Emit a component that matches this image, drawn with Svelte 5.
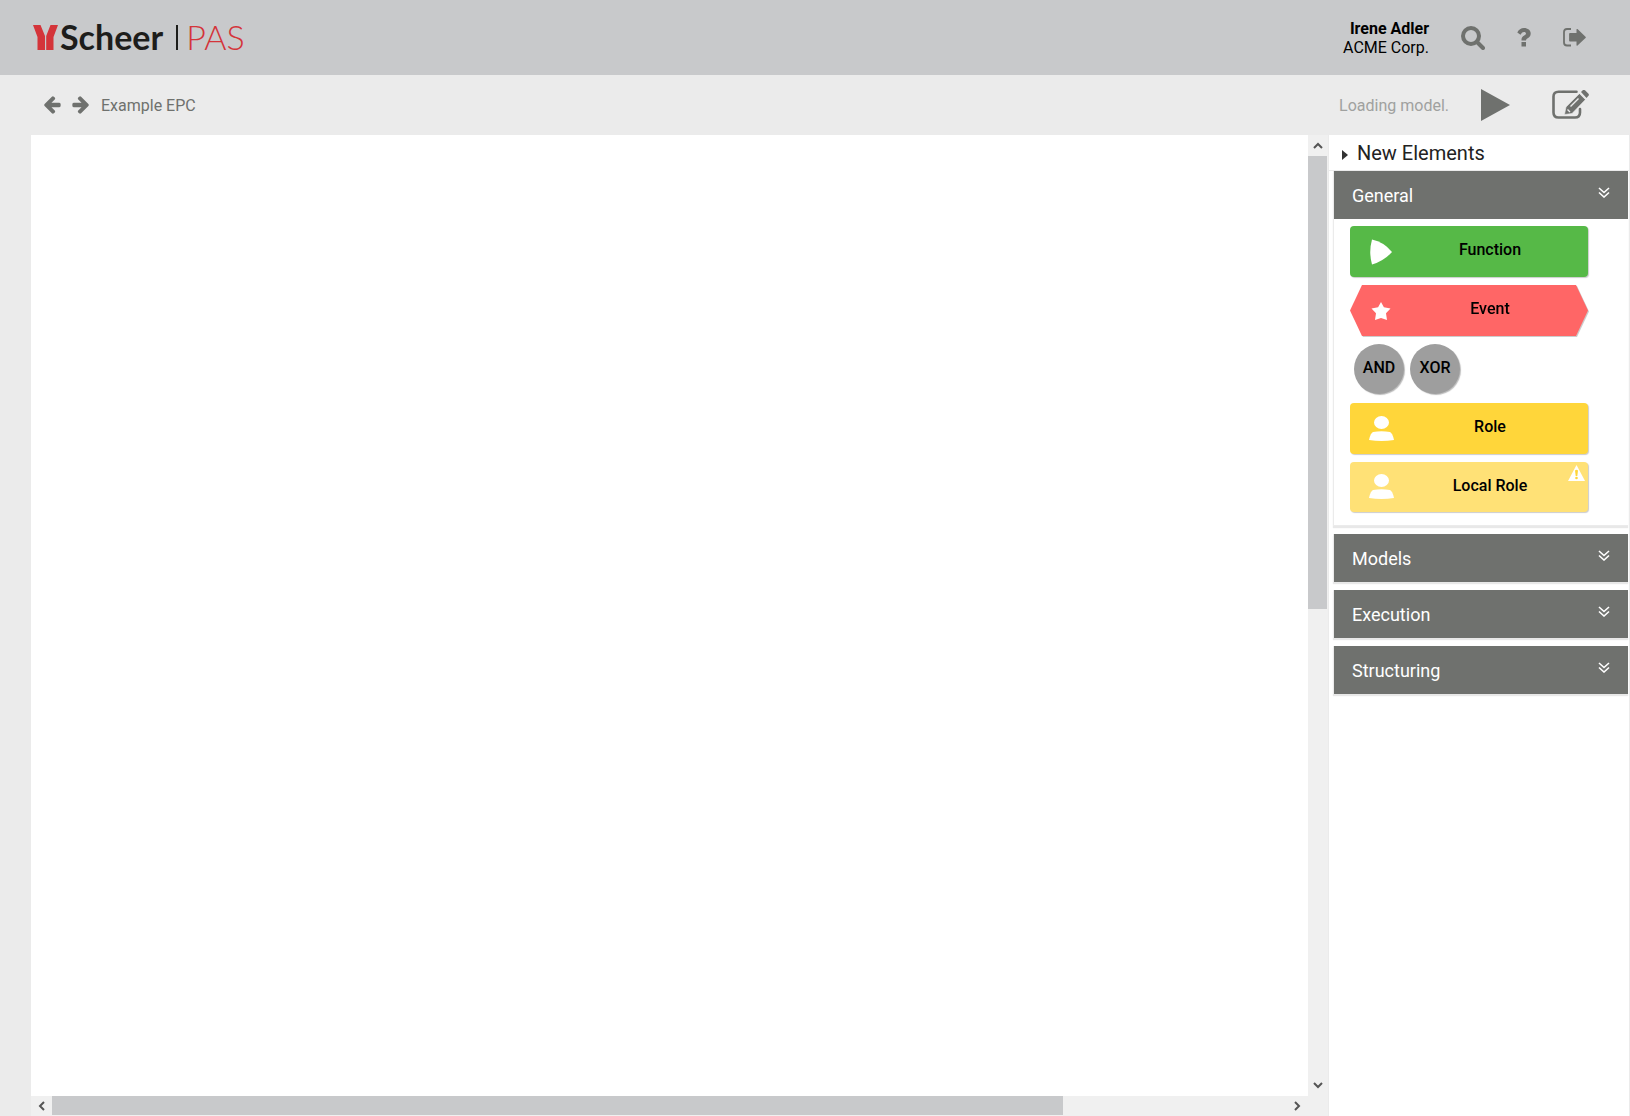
<script>
  let sections = $state([
    { name: 'General', open: true },
    { name: 'Models', open: false },
    { name: 'Execution', open: false },
    { name: 'Structuring', open: false }
  ]);
</script>

<div class="app">
  <header class="top">
    <a class="logo" href="/" aria-label="Scheer PAS">
      <svg class="mark" width="25" height="25" viewBox="0 0 25 25" aria-hidden="true">
        <path d="M0 0h7.500L12 11V25H4.500V12z M25 0h-7.500L13.200 11V25H20.500V12z" />
      </svg>
      <span class="scheer">Scheer</span>
      <span class="bar"></span>
      <span class="pas">PAS</span>
    </a>
    <div class="account">
      <div class="user"><strong>Irene Adler</strong><span>ACME Corp.</span></div>
      <button class="icon" aria-label="Search">
        <svg width="24" height="24" viewBox="0 0 24 24"><circle cx="10" cy="10" r="8" fill="none" stroke="currentColor" stroke-width="4" /><path d="M16 16l6 6" stroke="currentColor" stroke-width="4" stroke-linecap="round" /></svg>
      </button>
      <button class="icon" aria-label="Help">
        <svg width="14" height="19" viewBox="0 0 14 19"><path d="M4.500 14h4.500v4.500H4.500z M0.300 4.500C1.700 1.600 4 0 7 0c3.800 0 6.700 2.300 6.700 5.500 0 2.500-1.400 3.700-3 4.700C9.500 11 9 11.400 9 12.600H4.500v-1c0-1.900 1-3 2.700-4C8.500 6.900 9 6.400 9 5.500 9 4.600 8.200 4 7 4 5.600 4 4.800 4.700 3.500 6.700z" fill="currentColor" /></svg>
      </button>
      <button class="icon" aria-label="Sign out">
        <svg width="23" height="19" viewBox="0 0 23 19"><path d="M8 1H4Q1 1 1 4v10.500Q1 17.500 4 17.500h4" fill="none" stroke="currentColor" stroke-width="1.800" /><path d="M13.500 1.500q0-1 1-.4l8 7.600q.7.700 0 1.400l-8 7.500q-1 .7-1-.5V13.500H7q-.9 0-.9-.9V6q0-.9.900-.9h6.500z" fill="currentColor" /></svg>
      </button>
    </div>
  </header>

  <div class="toolbar">
    <nav class="history">
      <button class="icon" aria-label="Back">
        <svg width="18" height="18" viewBox="90 90 1600 1612"><path d="M1664 832v128q0 53-32.500 90.500t-84.500 37.500h-704l293 294q38 36 38 90t-38 90l-75 76q-37 37-90 37-52 0-91-37l-651-652q-37-37-37-90 0-52 37-91l651-650q38-38 91-38 52 0 90 38l75 74q38 38 38 91t-38 91l-293 293h704q52 0 84.500 37.500t32.500 90.500z" fill="currentColor" /></svg>
      </button>
      <button class="icon" aria-label="Forward">
        <svg class="flip" width="18" height="18" viewBox="90 90 1600 1612"><path d="M1664 832v128q0 53-32.500 90.500t-84.500 37.500h-704l293 294q38 36 38 90t-38 90l-75 76q-37 37-90 37-52 0-91-37l-651-652q-37-37-37-90 0-52 37-91l651-650q38-38 91-38 52 0 90 38l75 74q38 38 38 91t-38 91l-293 293h704q52 0 84.500 37.500t32.500 90.500z" fill="currentColor" /></svg>
      </button>
      <span class="title">Example EPC</span>
    </nav>
    <div class="actions">
      <span class="status">Loading model.</span>
      <button class="icon" aria-label="Run">
        <svg width="29" height="32" viewBox="0 0 29 32"><path d="M0 0l29 16L0 32z" fill="currentColor" /></svg>
      </button>
      <button class="icon" aria-label="Edit">
        <svg width="37" height="30" viewBox="0 0 37 30"><path d="M24.500 1.800H6.500Q1.500 1.800 1.500 6.500v16q0 5 5 5h16.500q5 0 5-5V19" fill="none" stroke="currentColor" stroke-width="2.600" stroke-linecap="round" /><path d="M28 3l6 6L20 23.500l-7.500 1L14 17z" fill="currentColor" stroke="#ebebeb" stroke-width=".6" /><path d="M29 2l2-2q1-.5 2 .3l3.500 3.500q.8 1 0 2L34.500 8z" fill="currentColor" /><path d="M27.300 2.700l6.700 6.700M18.500 16.500l8-8M15.500 19.500l2.500 2.500" stroke="#ebebeb" stroke-width="1.400" /></svg>
      </button>
    </div>
  </div>

  <div class="workspace">
    <main class="canvas" aria-label="Model canvas"></main>
    <div class="scroll vertical">
      <button aria-label="Scroll up"><svg width="10" height="7" viewBox="0 0 10 7"><path d="M1 6l4-4 4 4" /></svg></button>
      <div class="track"><div class="thumb"></div></div>
      <button aria-label="Scroll down"><svg width="10" height="7" viewBox="0 0 10 7"><path d="M1 1l4 4 4-4" /></svg></button>
    </div>
    <div class="scroll horizontal">
      <button aria-label="Scroll left"><svg width="7" height="10" viewBox="0 0 7 10"><path d="M6 1L2 5l4 4" /></svg></button>
      <div class="track"><div class="thumb"></div></div>
      <button aria-label="Scroll right"><svg width="7" height="10" viewBox="0 0 7 10"><path d="M1 1l4 4-4 4" /></svg></button>
    </div>
    <div class="corner"></div>

    <aside class="panel">
      <h2><svg width="6" height="10" viewBox="0 0 6 10" aria-hidden="true"><path d="M0 0l6 5-6 5z" fill="#333" /></svg>New Elements</h2>
      <div class="sections">
        {#each sections as section}
          <section>
            <button class="head" aria-expanded={section.open} onclick={() => (section.open = !section.open)}>
              <span>{section.name}</span>
              <svg width="12" height="11" viewBox="0 0 12 11" aria-hidden="true"><path d="M1 1l5 4.500L11 1M1 5.500L6 10l5-4.500" /></svg>
            </button>
            {#if section.open && section.name === 'General'}
              <div class="body">
                <button class="element function">
                  <svg width="22" height="26" viewBox="0 0 22 26"><path d="M2 .5Q14 3 22 13 14 22 2 25.500-1.500 13 2 .5z" fill="#fff" /></svg>
                  <span>Function</span>
                </button>
                <div class="hex">
                  <button class="element event">
                    <svg width="20" height="18" viewBox="0 0 20 18"><path d="M10 0l2.900 5.300L19.500 6.500 15 11.200 16 18 10 16 4 18l1-6.800L.5 6.500l6.600-1.200z" fill="#fff" /></svg>
                    <span>Event</span>
                  </button>
                </div>
                <div class="operators">
                  <button>AND</button>
                  <button>XOR</button>
                </div>
                <button class="element role">
                  <svg width="25" height="26" viewBox="0 0 25 26"><ellipse cx="12.500" cy="6.500" rx="7.500" ry="6.500" fill="#fff" /><path d="M0 24Q1.500 17 4 16q8.500-1.500 17 0 2.500 1 4 8-12.500 2-25 0z" fill="#fff" /></svg>
                  <span>Role</span>
                </button>
                <button class="element local">
                  <svg width="25" height="26" viewBox="0 0 25 26"><ellipse cx="12.500" cy="6.500" rx="7.500" ry="6.500" fill="#fff" /><path d="M0 24Q1.500 17 4 16q8.500-1.500 17 0 2.500 1 4 8-12.500 2-25 0z" fill="#fff" /></svg>
                  <span>Local Role</span>
                  <svg class="warning" width="17" height="16" viewBox="0 0 17 16"><path d="M8.500 0L17 16H0z" fill="#fff" /><path d="M7 5.500q1.500-1.500 3 0L9.300 11H7.700z" fill="#ffd63a" /><circle cx="8.500" cy="13" r="1.300" fill="#ffd63a" /></svg>
                </button>
              </div>
            {/if}
          </section>
        {/each}
      </div>
    </aside>
  </div>
</div>

<style>
  :global(body) {
    margin: 0;
  }
  .app {
    display: flex;
    flex-direction: column;
    height: 100vh;
    background: #ebebeb;
    color: #6f716e;
    font: 16px/19px Roboto, sans-serif;
  }
  button {
    padding: 0;
    border: 0;
    background: none;
    color: inherit;
    font: inherit;
    cursor: pointer;
  }
  svg {
    display: block;
    flex: none;
  }
  .top {
    display: flex;
    align-items: center;
    justify-content: space-between;
    height: 75px;
    padding: 0 44px 0 33px;
    background: #c8c9cb;
  }
  .logo {
    display: flex;
    align-items: center;
    color: #1d1d1b;
    font: 34px/38px Lato, sans-serif;
    text-decoration: none;
  }
  .logo span {
    margin-bottom: 2px;
  }
  .mark {
    margin-right: 2px;
    fill: #d4343a;
  }
  .scheer {
    font-weight: 700;
  }
  .logo .bar {
    width: 2px;
    height: 25px;
    margin: 0 8px 0 13px;
    background: #1d1d1b;
  }
  .pas {
    color: #d4343a;
    font-weight: 300;
  }
  .account {
    display: flex;
    align-items: center;
    gap: 32px;
  }
  .user {
    display: flex;
    flex-direction: column;
    color: #000;
    text-align: right;
  }
  .toolbar {
    display: flex;
    align-items: center;
    justify-content: space-between;
    height: 60px;
    padding: 0 41px 0 43px;
  }
  .history {
    display: flex;
    align-items: center;
    gap: 11px;
  }
  .flip {
    transform: scaleX(-1);
  }
  .actions {
    display: flex;
    align-items: center;
    gap: 42px;
  }
  .status {
    margin-right: -10px;
    color: #a0a19f;
  }
  .workspace {
    display: grid;
    flex: 1;
    grid-template: minmax(0, 1fr) 20px / minmax(0, 1fr) 20px 302px;
    min-height: 0;
    padding-left: 31px;
  }
  .canvas {
    background: #fff;
  }
  .scroll {
    display: flex;
    background: #f0f0f0;
  }
  .scroll button {
    display: grid;
    flex: none;
    place-items: center;
    width: 19px;
    height: 21px;
  }
  .scroll path {
    fill: none;
    stroke: #555;
    stroke-width: 2;
  }
  .vertical {
    flex-direction: column;
  }
  .horizontal {
    grid-row: 2;
  }
  .horizontal button {
    width: 21px;
    height: 20px;
  }
  .track {
    flex: 1;
  }
  .thumb {
    background: #c8c9cb;
  }
  .vertical .thumb {
    width: 19px;
    height: 49.3%;
  }
  .horizontal .thumb {
    width: 81.9%;
    height: 19px;
  }
  .corner {
    grid-area: 2 / 2;
    background: #f0f0f0;
  }
  .panel {
    grid-area: 1 / 3 / 3 / 4;
    border: solid #ebebeb;
    border-width: 0 1px;
    background: #fff;
  }
  h2 {
    display: flex;
    align-items: center;
    gap: 9px;
    height: 33px;
    margin: 0;
    padding: 2px 0 0 13px;
    border-bottom: 1px solid #ebebeb;
    color: #222;
    font-size: 20px;
    font-weight: 400;
  }
  h2 svg {
    margin-top: 3px;
  }
  .sections {
    display: flex;
    flex-direction: column;
    gap: 8px;
    padding: 0 1px 0 4px;
  }
  section {
    border-left: 1px solid #ebebeb;
    box-shadow: 0 2px 1px #e8e8e8;
  }
  .head {
    display: flex;
    align-items: center;
    justify-content: space-between;
    width: 100%;
    height: 48px;
    padding: 0 18px;
    background: #6f716e;
    color: #fff;
    font-size: 18px;
  }
  .head svg {
    margin-bottom: 6px;
    fill: none;
    stroke: #fff;
    stroke-width: 1.6;
  }
  .body {
    display: flex;
    flex-direction: column;
    gap: 8px;
    padding: 7px 40px 13px 16px;
    border-bottom: 1px solid #ebebeb;
    color: #000;
    font-weight: 500;
  }
  .element {
    position: relative;
    display: grid;
    grid-template-columns: 62px 1fr;
    align-items: center;
    justify-items: center;
    width: 100%;
    height: 51px;
    border-radius: 4px;
    box-shadow: 1px 1px 1px #ccc;
  }
  .element span {
    margin: 0 20px 4px 0;
  }
  .function {
    background: #56b947;
  }
  .hex {
    filter: drop-shadow(1px 1px 0 #ccc);
  }
  .event {
    border-radius: 0;
    background: #f66;
    box-shadow: none;
    clip-path: polygon(0 50%, 12px 0, calc(100% - 12px) 0, 100% 50%, calc(100% - 12px) 100%, 12px 100%);
  }
  .operators {
    display: flex;
    gap: 6px;
    height: 51px;
    padding-left: 4px;
  }
  .operators button {
    width: 50px;
    height: 50px;
    padding-bottom: 3px;
    border-radius: 50%;
    background: #9e9e9e;
    box-shadow: 1px 1px 1px #bbb;
  }
  .role {
    background: #ffd63a;
  }
  .local {
    height: 50px;
    background: #ffe176;
  }
  .warning {
    position: absolute;
    top: 3px;
    right: 3px;
  }
</style>
